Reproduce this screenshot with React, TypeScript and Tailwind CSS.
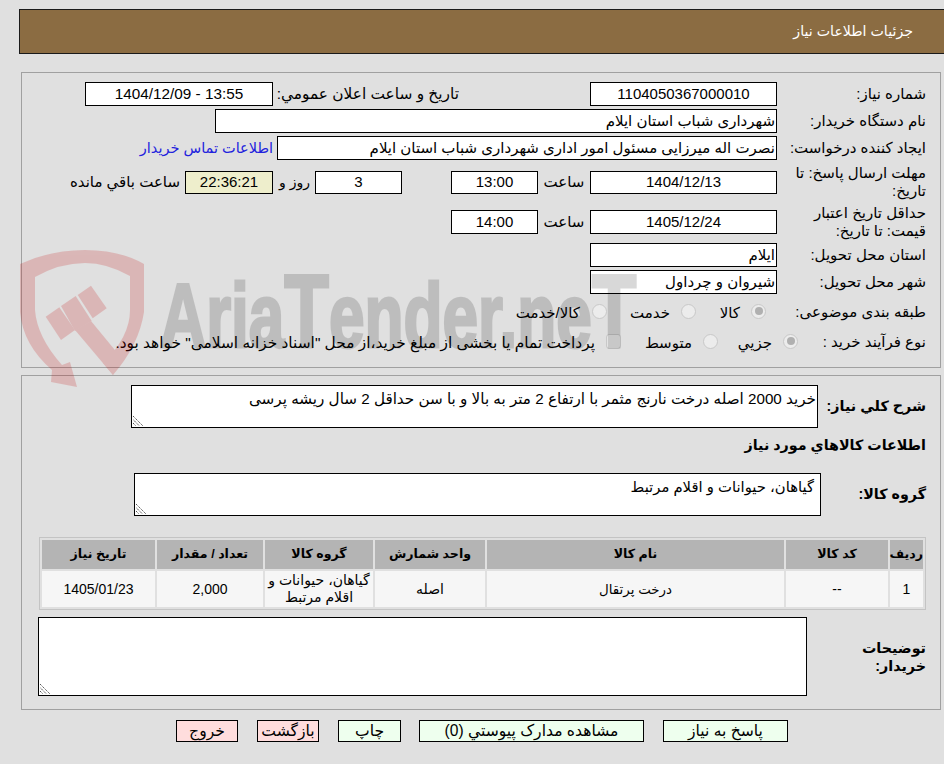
import React from "react";

const inputBox = "border border-black bg-white flex items-center justify-center shrink-0";

const Label: React.FC<{ children: React.ReactNode; className?: string }> = ({ children, className }) => (
    <div className={`w-[149px] shrink-0 pl-3 leading-[18px] ${className || ""}`}>{children}</div>
);

const Grip = () => (
    <svg className="absolute left-[1px] bottom-[1px]" width="10" height="10" viewBox="0 0 10 10" stroke="#555" fill="none">
        <path d="M0 0l10 10M0 3.5l6.5 6.5M0 7l3 3" strokeDasharray="1.4 0.8" />
    </svg>
);

const Radio: React.FC<{ on?: boolean }> = ({ on }) => (
    <span className="w-[15px] h-[15px] rounded-full border border-[#c8c8c8] bg-[#ececec] flex items-center justify-center shrink-0">
        {on && <span className="w-[8px] h-[8px] rounded-full bg-[#b0b0b0]" />}
    </span>
);

const Button: React.FC<{ className: string; children: React.ReactNode }> = ({ className, children }) => (
    <button className={`${className} h-[22px] border border-black text-[15.6px] leading-none flex items-center justify-center`}>
        {children}
    </button>
);

const Watermark = () => (
    <div className="absolute left-0 top-[245px] w-[700px] h-[145px] pointer-events-none select-none overflow-hidden">
        <svg className="absolute left-[15px] top-0" width="135" height="145" viewBox="0 0 135 145">
            <g fill="#c40000" opacity="0.18">
                <path d="M5 19Q35 5 70 5Q105 5 129 19L129 67Q124 100 98 130L88 118Q115 92 115 65L115 31Q92 18 70 18Q45 18 20 32L20 65Q22 92 47 120L55 117L62 142L36 137L37 125Q8 100 5 67Z" />
                <path d="M76 76L104 110L98 130L60 85Z" />
                <path d="M30.7 71.7L44.3 62.3L60 85L46 95Z" />
                <path d="M46 61L60.7 51L76.7 76L60 86Z" />
                <path d="M62.7 50L76 40.7L91.7 63.3L77.7 73.3Z" />
            </g>
        </svg>
        <div
            className="absolute left-[160px] top-[15px] text-[90px] leading-none font-bold text-black opacity-15 origin-left scale-x-[0.71] whitespace-nowrap [-webkit-text-stroke:3px_black]"
            style={{ fontFamily: "'Liberation Sans', sans-serif" }}
            dir="ltr"
        >
            Aria<span className="text-[103px]">T</span>ender.ne<span className="text-[103px]">T</span>
        </div>
    </div>
);

export default function App() {
    return (
        <div
            dir="rtl"
            className="relative w-[944px] h-[764px] overflow-hidden bg-[#e0e0e0] text-[15px] text-black"
            style={{ fontFamily: "'Liberation Sans', 'DejaVu Sans', sans-serif" }}
        >
            <div className="absolute top-[9px] left-[19px] right-[-10px] h-[45px] bg-[#8b6c42] border border-[#1a1a1a] flex items-center pr-[40px] pt-[1px] text-white text-[14.2px]">
                جزئيات اطلاعات نياز
            </div>

            <div className="pt-[72px] pr-[3px] pl-[21px]">
                {/* top panel */}
                <div className="h-[296px] border border-[#a0a0a0] pt-[9px] pr-[14px]">
                    <div className="flex h-[24px] items-center">
                        <Label>شماره نياز:</Label>
                        <div className={`${inputBox} w-[187px] h-[24px]`}>1104050367000010</div>
                        <div className="w-[131px] shrink-0" />
                        <div className="w-[186px] shrink-0 text-[15.4px] whitespace-nowrap">تاريخ و ساعت اعلان عمومي:</div>
                        <div className={`${inputBox} w-[188px] h-[24px] text-[15.3px]`} dir="ltr">1404/12/09 - 13:55</div>
                    </div>
                    <div className="flex h-[24px] items-center mt-[3px]">
                        <Label>نام دستگاه خريدار:</Label>
                        <div className={`${inputBox} w-[562px] h-[24px] !justify-start pr-[1px]`}>شهرداری شباب استان ایلام</div>
                    </div>
                    <div className="flex h-[24px] items-center mt-[3px]">
                        <Label>ایجاد کننده درخواست:</Label>
                        <div className={`${inputBox} w-[500px] h-[24px] !justify-start pr-[1px]`}>نصرت اله میرزایی مسئول امور اداری شهرداری شباب استان ایلام</div>
                        <a className="text-[#2222dd] text-[14.5px] pr-[4px] pt-[2px] whitespace-nowrap">اطلاعات تماس خريدار</a>
                    </div>
                    <div className="flex h-[38px] items-center mt-[3px]">
                        <Label>مهلت ارسال پاسخ: تا تاریخ:</Label>
                        <div className={`${inputBox} w-[187px] h-[23px]`}>1404/12/13</div>
                        <div className="w-[52px] text-center shrink-0">ساعت</div>
                        <div className={`${inputBox} w-[87px] h-[23px]`}>13:00</div>
                        <div className="w-[49px] shrink-0" />
                        <div className={`${inputBox} w-[87px] h-[23px]`}>3</div>
                        <div className="w-[42px] text-center text-[14px] shrink-0 pl-[1px]">روز و</div>
                        <div className={`${inputBox} w-[88px] h-[23px] !bg-[#eeeecc]`}>22:36:21</div>
                        <div className="pr-[5px] whitespace-nowrap">ساعت باقي مانده</div>
                    </div>
                    <div className="flex h-[38px] items-center mt-[2px]">
                        <Label>حداقل تاریخ اعتبار قیمت: تا تاریخ:</Label>
                        <div className={`${inputBox} w-[187px] h-[24px]`}>1405/12/24</div>
                        <div className="w-[52px] text-center shrink-0">ساعت</div>
                        <div className={`${inputBox} w-[87px] h-[24px]`}>14:00</div>
                    </div>
                    <div className="flex h-[24px] items-center mt-[2px]">
                        <Label>استان محل تحویل:</Label>
                        <div className={`${inputBox} w-[187px] h-[24px] !justify-start pr-[1px]`}>ایلام</div>
                    </div>
                    <div className="flex h-[24px] items-center mt-[3px]">
                        <Label>شهر محل تحویل:</Label>
                        <div className={`${inputBox} w-[187px] h-[24px] !justify-start pr-[1px]`}>شیروان و چرداول</div>
                    </div>
                    <div className="flex h-[24px] items-center mt-[5px]">
                        <Label className="pt-[2px]">طبقه بندی موضوعی:</Label>
                        <div className="flex items-center gap-[11px] w-[70px] mr-[11px] shrink-0">
                            <Radio on />
                            <span className="pt-[4px]">كالا</span>
                        </div>
                        <div className="flex items-center gap-[11px] w-[89px] shrink-0">
                            <Radio />
                            <span className="pt-[4px]">خدمت</span>
                        </div>
                        <div className="flex items-center gap-[12px] shrink-0">
                            <Radio />
                            <span className="pt-[4px] whitespace-nowrap">كالا/خدمت</span>
                        </div>
                    </div>
                    <div className="flex h-[24px] items-center mt-[6px]">
                        <Label className="!w-[128px] pt-[2px]">نوع فرآیند خرید :</Label>
                        <div className="flex items-center gap-[11px] w-[80px] shrink-0">
                            <Radio on />
                            <span className="pt-[4px]">جزيي</span>
                        </div>
                        <div className="flex items-center gap-[11px] w-[97px] shrink-0">
                            <Radio />
                            <span className="pt-[4px]">متوسط</span>
                        </div>
                        <span className="w-[15px] h-[15px] rounded-[3px] border border-[#c8c8c8] bg-[#ececec] shrink-0" />
                        <span className="pr-[11px] pt-[4px] text-[15.4px] whitespace-nowrap">پرداخت تمام یا بخشی از مبلغ خرید،از محل "اسناد خزانه اسلامی" خواهد بود.</span>
                    </div>
                </div>

                {/* lower panel */}
                <div className="h-[335px] mt-[7px] border border-[#a0a0a0] pt-[9px] pr-[14px]">
                    <div className="flex h-[43px] items-center">
                        <div className="w-[108px] shrink-0 font-bold text-[14.3px] whitespace-nowrap">شرح كلي نياز:</div>
                        <div className={`${inputBox} relative w-[687px] h-[43px] !items-start !justify-start pr-[1px] pt-[2px] text-[15.2px]`}>
                            خرید 2000 اصله درخت نارنج مثمر با ارتفاع 2 متر به بالا و با سن حداقل 2 سال ریشه پرسی
                            <Grip />
                        </div>
                    </div>
                    <div className="font-bold text-[14.3px] h-[20px] mt-[7px] leading-[20px]">اطلاعات كالاهاي مورد نياز</div>
                    <div className="flex h-[43px] items-center mt-[18px]">
                        <div className="w-[105px] shrink-0 font-bold text-[14.3px]">گروه کالا:</div>
                        <div className={`${inputBox} relative w-[687px] h-[43px] !items-start !justify-start pr-[6px] pt-[2px] text-[14.8px]`}>
                            گیاهان، حیوانات و اقلام مرتبط
                            <Grip />
                        </div>
                    </div>

                    <table className="mt-[21px] w-[887px] table-fixed border-separate border-spacing-[2px] border border-[#c4c4c4] text-[14px]">
                        <thead>
                            <tr className="h-[29px] bg-[#b4b4b4] font-bold text-[12.6px]">
                                <th className="w-[33px]">رديف</th>
                                <th className="w-[102px]">کد کالا</th>
                                <th className="w-[297px]">نام کالا</th>
                                <th className="w-[110px]">واحد شمارش</th>
                                <th className="w-[108px]">گروه کالا</th>
                                <th className="w-[106px]">تعداد / مقدار</th>
                                <th>تاريخ نياز</th>
                            </tr>
                        </thead>
                        <tbody>
                            <tr className="h-[36px] bg-[#f6f6f6] text-center leading-[17px]">
                                <td>1</td>
                                <td>--</td>
                                <td className="text-[13.4px]">درخت پرتقال</td>
                                <td>اصله</td>
                                <td>گیاهان، حیوانات و اقلام مرتبط</td>
                                <td>2,000</td>
                                <td>1405/01/23</td>
                            </tr>
                        </tbody>
                    </table>

                    <div className="flex h-[79px] items-center mt-[7px]">
                        <div className="w-[119px] shrink-0 font-bold text-[14.3px] leading-[18px]">
                            <div className="w-[70px]">توضیحات خریدار:</div>
                        </div>
                        <div className={`${inputBox} relative w-[769px] h-[79px]`}>
                            <Grip />
                        </div>
                    </div>
                </div>
            </div>

            <div className="flex mt-[10px] pr-[156px]">
                <Button className="w-[125px] bg-[#eeffee]">پاسخ به نياز</Button>
                <Button className="w-[225px] ml-[18px] mr-[19px] bg-[#eeffee]">مشاهده مدارک پيوستي (0)</Button>
                <Button className="w-[63px] bg-[#eeffee]">چاپ</Button>
                <Button className="w-[62px] mr-[19px] bg-[#ffdddd]">بازگشت</Button>
                <Button className="w-[62px] mr-[19px] bg-[#ffdddd]">خروج</Button>
            </div>

            <Watermark />
        </div>
    );
}
